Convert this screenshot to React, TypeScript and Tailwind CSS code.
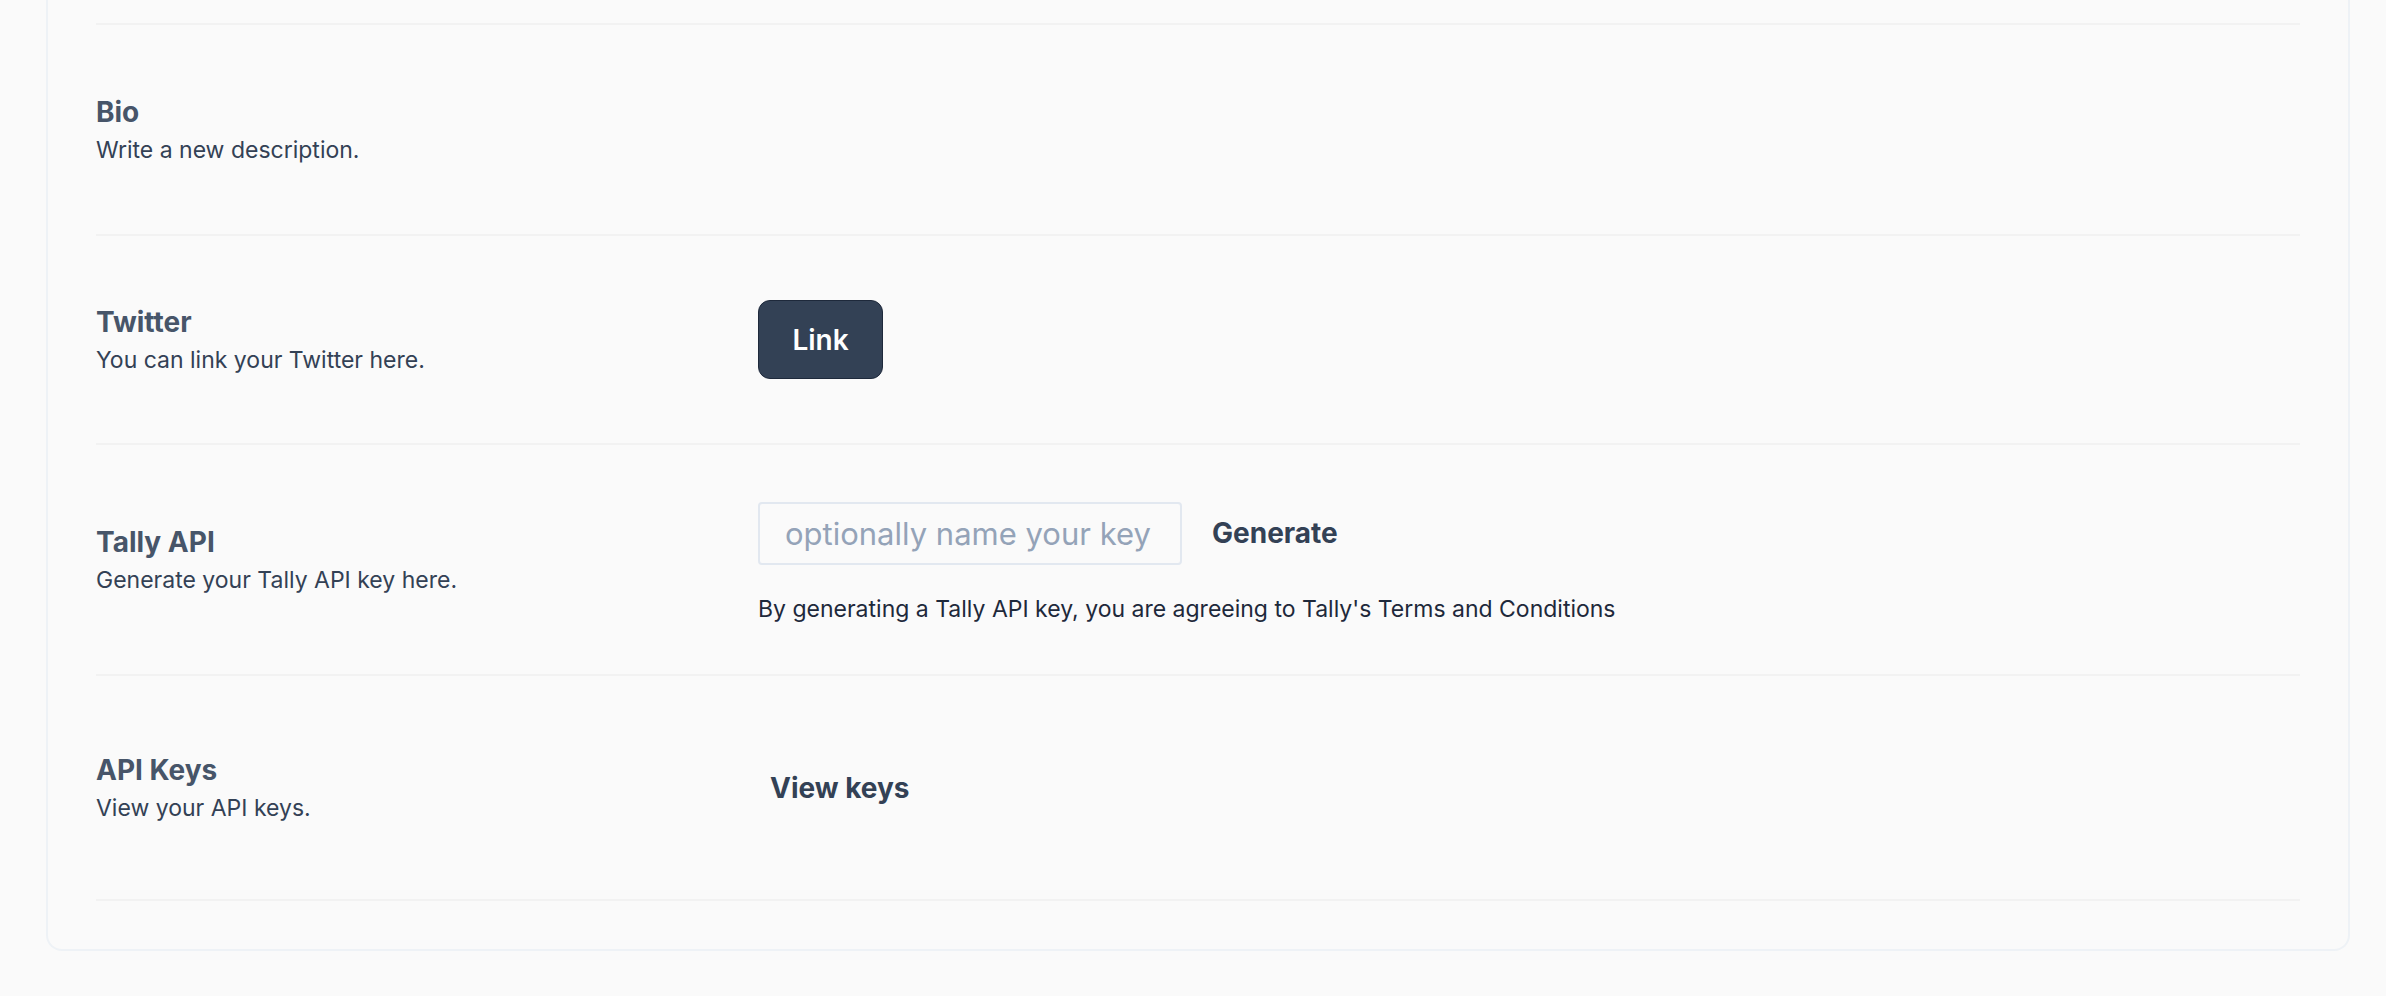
import React from 'react';

const font = { fontFamily: 'Inter, "Noto Sans", sans-serif' };

function Row({ title, desc, height, children }: { title: string; desc: string; height: string; children?: React.ReactNode }) {
  return (
    <div className={`flex items-center border-t-2 border-[#f2f2f2] ${height}`}>
      <div className="w-[662px] shrink-0">
        <h3 className="text-[28px] leading-[40px] font-bold text-[#475569]">{title}</h3>
        <p className="text-[23px] leading-[36px] text-[#334155]">{desc}</p>
      </div>
      <div className="flex-1">{children}</div>
    </div>
  );
}

export default function App() {
  return (
    <div className="min-h-screen bg-[#fafafa] pl-[46px] pr-[36px] pb-[45px]" style={font}>
      <div className="rounded-b-[16px] border-x-2 border-b-2 border-[#eef2f6] px-[48px] pt-[23px] pb-[48px]">
        <Row title="Bio" desc="Write a new description." height="h-[211px]" />
        <Row title="Twitter" desc="You can link your Twitter here." height="h-[209px]">
          <button className="h-[79px] w-[125px] rounded-[12px] border border-[#1e293b] bg-[#334155] text-[28px] font-semibold text-white">
            Link
          </button>
        </Row>
        <Row title="Tally API" desc="Generate your Tally API key here." height="h-[231px]">
          <div className="pt-[7px]">
            <div className="flex items-center gap-[30px]">
              <input
                placeholder="optionally name your key"
                className="h-[63px] w-[424px] rounded-[4px] border-2 border-[#e2e8f0] bg-transparent px-[25px] text-[31px] text-[#334155] outline-none placeholder:text-[#94a3b8]"
              />
              <button className="text-[28px] font-bold text-[#334155]">Generate</button>
            </div>
            <p className="mt-[28px] text-[23px] leading-[32px] text-[#1e293b]">
              By generating a Tally API key, you are agreeing to Tally's Terms and Conditions
            </p>
          </div>
        </Row>
        <div className="border-b-2 border-[#f2f2f2]">
          <Row title="API Keys" desc="View your API keys." height="h-[225px]">
            <button className="px-[12px] text-[28px] font-bold text-[#334155]">View keys</button>
          </Row>
        </div>
      </div>
    </div>
  );
}
